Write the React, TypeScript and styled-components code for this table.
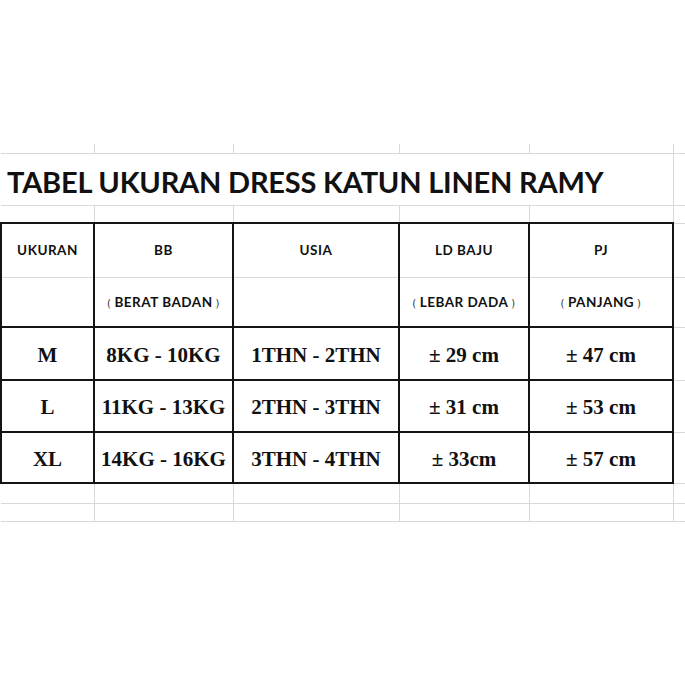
import React from "react";
import styled, { createGlobalStyle } from "styled-components";

const GlobalStyle = createGlobalStyle`
  html, body {
    margin: 0;
    padding: 0;
    background: #ffffff;
  }
`;

const GRID = "#d9d9d9";
const INK = "#141414";

const columns = [93, 139, 166, 130, 144, 13];

const rows = [
  { size: "M", bb: "8KG - 10KG", usia: "1THN - 2THN", ld: "± 29 cm", pj: "± 47 cm" },
  { size: "L", bb: "11KG - 13KG", usia: "2THN - 3THN", ld: "± 31 cm", pj: "± 53 cm" },
  { size: "XL", bb: "14KG - 16KG", usia: "3THN - 4THN", ld: "± 33cm", pj: "± 57 cm" },
];

const headers = [
  { title: "UKURAN", sub: "" },
  { title: "BB", sub: "BERAT BADAN" },
  { title: "USIA", sub: "" },
  { title: "LD BAJU", sub: "LEBAR DADA" },
  { title: "PJ", sub: "PANJANG" },
];

const Page = styled.div`
  padding-top: 144px;
  width: 685px;
  overflow: hidden;
`;

const Sheet = styled.table`
  border-collapse: collapse;
  table-layout: fixed;
  width: 685px;
`;

const Row = styled.tr<{ $h: number }>`
  height: ${(p) => p.$h}px;
`;

type Edges = { $t?: boolean; $b?: boolean; $l?: boolean; $r?: boolean; $noTop?: boolean; $noLeft?: boolean };

const edge = (thick?: boolean) => (thick ? `2px solid ${INK}` : `1px solid ${GRID}`);

const Cell = styled.td<Edges>`
  padding: 0;
  text-align: center;
  vertical-align: middle;
  white-space: nowrap;
  overflow: visible;
  border-top: ${(p) => (p.$noTop ? "none" : edge(p.$t))};
  border-bottom: ${(p) => edge(p.$b)};
  border-left: ${(p) => (p.$noLeft ? "none" : edge(p.$l))};
  border-right: ${(p) => edge(p.$r)};
`;

const Title = styled.div`
  font-family: Lato, "Open Sans", sans-serif;
  font-weight: 700;
  font-size: 29px;
  color: #111;
  text-align: left;
  padding: 4px 0 0 6px;
  letter-spacing: -0.2px;
`;

const HeadText = styled.span`
  font-family: Lato, "Noto Sans", sans-serif;
  font-weight: 700;
  font-size: 13.5px;
  letter-spacing: 0.5px;
  color: #111;
`;

const Paren = styled.span`
  font-family: "DejaVu Sans", sans-serif;
  font-weight: 400;
  font-size: 10px;
  color: #333;
  margin: 0 3px;
`;

const Value = styled.span`
  display: inline-block;
  padding-top: 3px;
  font-family: "Liberation Serif", "Times New Roman", serif;
  font-weight: 700;
  font-size: 21px;
  color: #111;
`;

const blankRow = (h: number, key: string, noTop = false) => (
  <Row $h={h} key={key}>
    {columns.map((_, i) => (
      <Cell key={i} $noTop={noTop} $noLeft={i === 0} />
    ))}
  </Row>
);

export default function App() {
  return (
    <>
      <GlobalStyle />
      <Page>
        <Sheet>
          <colgroup>
            {columns.map((w, i) => (
              <col key={i} style={{ width: w }} />
            ))}
          </colgroup>
          <tbody>
            {blankRow(9, "top", true)}
            <Row $h={52}>
              <Cell colSpan={5} $noLeft>
                <Title>TABEL UKURAN DRESS KATUN LINEN RAMY</Title>
              </Cell>
              <Cell />
            </Row>
            {blankRow(18, "gap")}
            <Row $h={54}>
              {headers.map((h, i) => (
                <Cell key={h.title} $t $l={i === 0} $r>
                  <HeadText>{h.title}</HeadText>
                </Cell>
              ))}
              <Cell />
            </Row>
            <Row $h={50}>
              {headers.map((h, i) => (
                <Cell key={h.title} $b $l={i === 0} $r>
                  {h.sub && (
                    <HeadText>
                      <Paren>(</Paren>
                      {h.sub}
                      <Paren>)</Paren>
                    </HeadText>
                  )}
                </Cell>
              ))}
              <Cell />
            </Row>
            {rows.map((r, ri) => (
              <Row $h={[53, 52, 51][ri]} key={r.size}>
                {[r.size, r.bb, r.usia, r.ld, r.pj].map((v, i) => (
                  <Cell key={i} $t $b $l={i === 0} $r>
                    <Value>{v}</Value>
                  </Cell>
                ))}
                <Cell />
              </Row>
            ))}
            {blankRow(20, "after1")}
            {blankRow(18, "after2")}
          </tbody>
        </Sheet>
      </Page>
    </>
  );
}
